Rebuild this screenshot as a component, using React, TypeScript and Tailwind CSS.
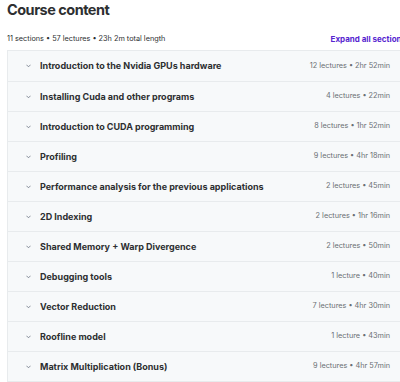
import React from "react";

const sections = [
  { title: "Introduction to the Nvidia GPUs hardware", meta: "12 lectures • 2hr 52min" },
  { title: "Installing Cuda and other programs", meta: "4 lectures • 22min" },
  { title: "Introduction to CUDA programming", meta: "8 lectures • 1hr 52min" },
  { title: "Profiling", meta: "9 lectures • 4hr 18min" },
  { title: "Performance analysis for the previous applications", meta: "2 lectures • 45min" },
  { title: "2D Indexing", meta: "2 lectures • 1hr 16min" },
  { title: "Shared Memory + Warp Divergence", meta: "2 lectures • 50min" },
  { title: "Debugging tools", meta: "1 lecture • 40min" },
  { title: "Vector Reduction", meta: "7 lectures • 4hr 30min" },
  { title: "Roofline model", meta: "1 lecture • 43min" },
  { title: "Matrix Multiplication (Bonus)", meta: "9 lectures • 4hr 57min" },
];

function Chevron() {
  return (
    <svg width="5" height="4" viewBox="0 0 5 4" className="shrink-0 text-gray-500">
      <path d="M0.7 1 L2.5 2.8 L4.3 1" fill="none" stroke="currentColor" strokeWidth="0.8" strokeLinecap="round" strokeLinejoin="round" />
    </svg>
  );
}

export default function App() {
  return (
    <div className="w-[400px] h-[382px] overflow-hidden bg-white" style={{ fontFamily: "Inter, 'Noto Sans', sans-serif" }}>
      <div className="w-[406px] pl-[7px]">
        <h2 className="text-[14.5px] leading-[20px] font-bold text-[#2d2f31] tracking-[-0.5px]">Course content</h2>

        <div className="flex items-center justify-between mt-[14px] h-[10px]">
          <span className="text-[7.3px] text-[#2d2f31]">11 sections • 57 lectures • 23h 2m total length</span>
          <span className="text-[8px] font-bold text-[#5624d0] whitespace-nowrap">Expand all sections</span>
        </div>

        <div className="mt-[6px] border border-[#e8ebed] bg-[#f7f9fa]">
          {sections.map((s, i) => (
            <div
              key={i}
              className={`flex items-center h-[30px] pl-[18px] pr-[15px] ${i > 0 ? "border-t border-[#e8ebed]" : ""}`}
            >
              <Chevron />
              <span className="ml-[9px] text-[9px] font-bold text-[#2d2f31] flex-1 truncate">{s.title}</span>
              <span className="text-[7.3px] text-[#6a6f73] whitespace-nowrap">{s.meta}</span>
            </div>
          ))}
        </div>
      </div>
    </div>
  );
}
